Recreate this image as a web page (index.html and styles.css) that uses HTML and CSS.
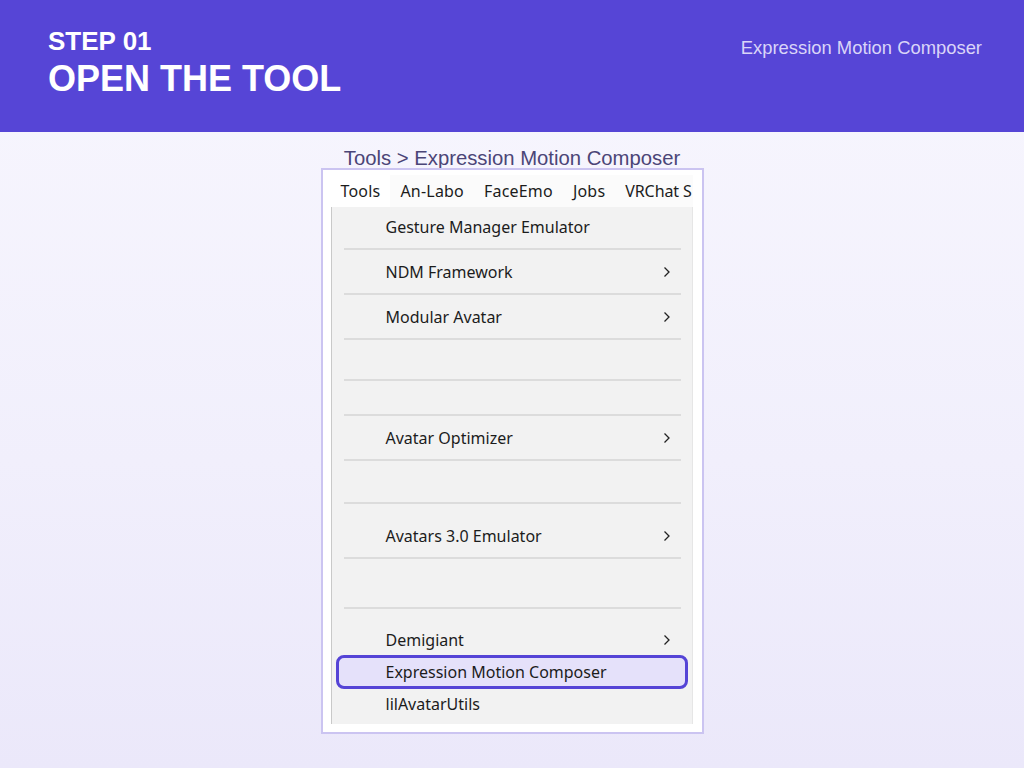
FILE: index.html
```html
<!DOCTYPE html>
<html lang="en">
<head>
    <meta charset="UTF-8">
    <meta name="viewport" content="width=device-width, initial-scale=1.0">
    <title>Step 01 - Open the Tool</title>
    <link rel="stylesheet" href="styles.css">
</head>
<body>
    <!-- Slide header -->
    <header class="slide-header">
        <div class="heading">
            <div class="step">STEP 01</div>
            <h1>OPEN THE TOOL</h1>
        </div>
        <div class="product">Expression Motion Composer</div>
    </header>

    <main class="slide-body">
        <p class="caption">Tools &gt; Expression Motion Composer</p>

        <!-- Editor menu capture -->
        <div class="shot">
            <div class="menubar">
                <span class="menubar-item active">Tools</span>
                <span class="menubar-item">An-Labo</span>
                <span class="menubar-item">FaceEmo</span>
                <span class="menubar-item">Jobs</span>
                <span class="menubar-item">VRChat S</span>
            </div>

            <div class="menu">
                <div class="item">Gesture Manager Emulator</div>
                <div class="sep"></div>
                <div class="item">NDM Framework<svg class="chev" viewBox="0 0 8 12"><path d="M1.5 1.5 6 6 1.5 10.5"/></svg></div>
                <div class="sep"></div>
                <div class="item">Modular Avatar<svg class="chev" viewBox="0 0 8 12"><path d="M1.5 1.5 6 6 1.5 10.5"/></svg></div>
                <div class="sep"></div>
                <div class="blank"></div>
                <div class="sep"></div>
                <div class="blank short"></div>
                <div class="sep"></div>
                <div class="item">Avatar Optimizer<svg class="chev" viewBox="0 0 8 12"><path d="M1.5 1.5 6 6 1.5 10.5"/></svg></div>
                <div class="sep"></div>
                <div class="blank mid"></div>
                <div class="sep"></div>
                <div class="item lead">Avatars 3.0 Emulator<svg class="chev" viewBox="0 0 8 12"><path d="M1.5 1.5 6 6 1.5 10.5"/></svg></div>
                <div class="sep"></div>
                <div class="blank tall"></div>
                <div class="sep"></div>
                <div class="item lead compact">Demigiant<svg class="chev" viewBox="0 0 8 12"><path d="M1.5 1.5 6 6 1.5 10.5"/></svg></div>
                <div class="item compact picked">Expression Motion Composer</div>
                <div class="item compact">lilAvatarUtils</div>
            </div>
        </div>
    </main>
</body>
</html>
```

FILE: styles.css
```css
* {
    box-sizing: border-box;
}

body {
    margin: 0;
    min-height: 100vh;
    font-family: "Liberation Sans", Arial, sans-serif;
    background: linear-gradient(180deg, #f8f7fe 0%, #f1effc 60%, #ebe8fa 100%);
}

/* Header band */
.slide-header {
    height: 132px;
    background: #5645d6;
    color: #fff;
    display: flex;
    justify-content: space-between;
    align-items: flex-start;
    padding: 26px 42px 0 48px;
}

.step {
    font-size: 26px;
    font-weight: bold;
    line-height: 30px;
}

h1 {
    margin: 0;
    font-size: 36px;
    font-weight: bold;
    line-height: 46px;
}

.product {
    margin-top: 11px;
    font-size: 18.4px;
    line-height: 22px;
    color: #dad5f8;
}

/* Body */
.slide-body {
    display: flex;
    flex-direction: column;
    align-items: center;
}

.caption {
    margin: 16px 0 0;
    font-size: 20.3px;
    line-height: 20px;
    color: #4b4577;
}

.shot {
    width: 383px;
    background: #fff;
    border: 2px solid #cbc4f1;
    padding: 5px 9px 8px 8px;
}

/* Menu bar */
.menubar {
    display: flex;
    height: 32px;
    background: #fbfbfb;
    font-family: "Noto Sans", "Open Sans", sans-serif;
    font-size: 16px;
    letter-spacing: 0.2px;
    color: #1c1c1c;
    white-space: nowrap;
    overflow: hidden;
}

.menubar-item {
    padding: 0 10px;
    line-height: 33px;
}

.menubar-item:last-child {
    padding-right: 0;
    letter-spacing: -0.1px;
}

.menubar-item.active {
    background: #fff;
}

/* Dropdown */
.menu {
    display: flex;
    flex-direction: column;
    background: #f2f2f2;
    border-left: 1px solid #c9c9c9;
    border-right: 1px solid #e6e6e6;
    padding: 3px 0 4px;
    font-family: "Noto Sans", "Open Sans", sans-serif;
    font-size: 16px;
    color: #1c1c1c;
}

.item {
    height: 33px;
    flex-shrink: 0;
    display: flex;
    align-items: center;
    justify-content: space-between;
    padding: 0 21px 0 54px;
}

.item.compact {
    height: 32px;
}

.item.lead {
    margin-top: 10px;
}

.item.picked {
    height: 34px;
    margin: -1px 4px -1px 4px;
    padding-left: 47px;
    border: 3px solid #5544d6;
    border-radius: 8px;
    background: #e5e1fa;
}

.chev {
    width: 8px;
    height: 12px;
    fill: none;
    stroke: #222;
    stroke-width: 1.3;
}

.sep {
    height: 2px;
    flex-shrink: 0;
    margin: 5px 11px 5px 12px;
    background: #dcdcdc;
}

.blank {
    height: 29px;
}

.blank.short {
    height: 23px;
}

.blank.mid {
    height: 31px;
}

.blank.tall {
    height: 38px;
}
```
